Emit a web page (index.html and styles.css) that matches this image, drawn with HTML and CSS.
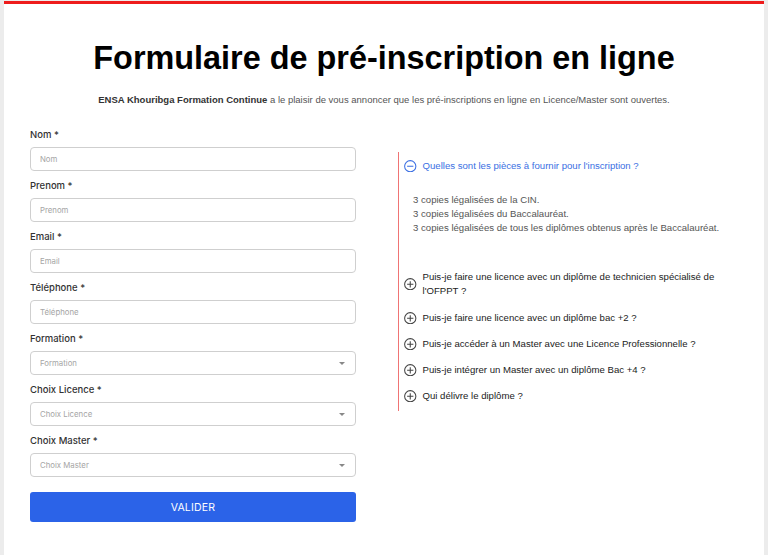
FILE: index.html
```html
<!DOCTYPE html>
<html lang="fr">
<head>
<meta charset="utf-8">
<title>Formulaire de pré-inscription en ligne</title>
<link rel="stylesheet" href="styles.css">
</head>
<body>
<div class="page">
  <h1 class="title">Formulaire de pré-inscription en ligne</h1>
  <p class="intro"><strong>ENSA Khouribga Formation Continue</strong> a le plaisir de vous annoncer que les pré-inscriptions en ligne en Licence/Master sont ouvertes.</p>
  <div class="main">
    <form class="form">
      <div class="field">
        <label class="label">Nom *</label>
        <div class="input"><span class="ph">Nom</span></div>
      </div>
      <div class="field">
        <label class="label">Prenom *</label>
        <div class="input"><span class="ph">Prenom</span></div>
      </div>
      <div class="field">
        <label class="label">Email *</label>
        <div class="input"><span class="ph">Email</span></div>
      </div>
      <div class="field">
        <label class="label">Téléphone *</label>
        <div class="input"><span class="ph">Téléphone</span></div>
      </div>
      <div class="field">
        <label class="label">Formation *</label>
        <div class="input select"><span class="ph">Formation</span><span class="caret"></span></div>
      </div>
      <div class="field">
        <label class="label">Choix Licence *</label>
        <div class="input select"><span class="ph">Choix Licence</span><span class="caret"></span></div>
      </div>
      <div class="field">
        <label class="label">Choix Master *</label>
        <div class="input select"><span class="ph">Choix Master</span><span class="caret"></span></div>
      </div>
      <button type="button" class="submit">VALIDER</button>
    </form>
    <div class="faq">
      <div class="item open">
        <div class="q">
          <svg class="ic" viewBox="0 0 12 12"><circle cx="6" cy="6" r="5.4" fill="none" stroke="currentColor" stroke-width="1"/><path d="M3 6h6" stroke="currentColor" stroke-width="1"/></svg>
          <span>Quelles sont les pièces à fournir pour l'inscription ?</span>
        </div>
        <div class="answer">
          <p>3 copies légalisées de la CIN.</p>
          <p>3 copies légalisées du Baccalauréat.</p>
          <p>3 copies légalisées de tous les diplômes obtenus après le Baccalauréat.</p>
        </div>
      </div>
      <div class="item item-long">
        <div class="q">
          <svg class="ic" viewBox="0 0 12 12"><circle cx="6" cy="6" r="5.4" fill="none" stroke="currentColor" stroke-width="1"/><path d="M3 6h6M6 3v6" stroke="currentColor" stroke-width="1"/></svg>
          <span>Puis-je faire une licence avec un diplôme de technicien spécialisé de l'OFPPT ?</span>
        </div>
      </div>
      <div class="item">
        <div class="q">
          <svg class="ic" viewBox="0 0 12 12"><circle cx="6" cy="6" r="5.4" fill="none" stroke="currentColor" stroke-width="1"/><path d="M3 6h6M6 3v6" stroke="currentColor" stroke-width="1"/></svg>
          <span>Puis-je faire une licence avec un diplôme bac +2 ?</span>
        </div>
      </div>
      <div class="item">
        <div class="q">
          <svg class="ic" viewBox="0 0 12 12"><circle cx="6" cy="6" r="5.4" fill="none" stroke="currentColor" stroke-width="1"/><path d="M3 6h6M6 3v6" stroke="currentColor" stroke-width="1"/></svg>
          <span>Puis-je accéder à un Master avec une Licence Professionnelle ?</span>
        </div>
      </div>
      <div class="item">
        <div class="q">
          <svg class="ic" viewBox="0 0 12 12"><circle cx="6" cy="6" r="5.4" fill="none" stroke="currentColor" stroke-width="1"/><path d="M3 6h6M6 3v6" stroke="currentColor" stroke-width="1"/></svg>
          <span>Puis-je intégrer un Master avec un diplôme Bac +4 ?</span>
        </div>
      </div>
      <div class="item">
        <div class="q">
          <svg class="ic" viewBox="0 0 12 12"><circle cx="6" cy="6" r="5.4" fill="none" stroke="currentColor" stroke-width="1"/><path d="M3 6h6M6 3v6" stroke="currentColor" stroke-width="1"/></svg>
          <span>Qui délivre le diplôme ?</span>
        </div>
      </div>
    </div>
  </div>
</div>
</body>
</html>
```
FILE: styles.css
```css
* { box-sizing: border-box; }
html, body { margin: 0; }
body {
  background: #ececec;
  padding: 1px 4px 0 4px;
  font-family: "Liberation Sans", Arial, sans-serif;
  height: 555px;
  overflow: hidden;
}
.page {
  background: #fff;
  border-top: 3px solid #ee1c1c;
  min-height: 560px;
  padding: 0 26px;
}
.title {
  margin: 0;
  padding-top: 34px;
  text-align: center;
  font-size: 32.4px;
  font-weight: 700;
  color: #000;
  line-height: 40px;
}
.intro {
  margin: 15px 0 0;
  text-align: center;
  font-size: 9.5px;
  color: #555;
  line-height: 14px;
}
.intro strong { color: #333; }
.main {
  display: grid;
  grid-template-columns: 326px 1fr;
  column-gap: 42px;
  margin-top: 22px;
}
.form { display: flex; flex-direction: column; }
.field { display: flex; flex-direction: column; margin-bottom: 9px; }
.label {
  font-family: Inter, "Noto Sans", sans-serif;
  font-size: 9.5px;
  font-weight: 500;
  color: #333;
  line-height: 12px;
  margin-bottom: 6px;
}
.input {
  height: 24px;
  border: 1px solid #cfcfcf;
  border-radius: 4px;
  display: flex;
  align-items: center;
  padding: 0 9px;
}
.ph {
  font-family: Inter, "Noto Sans", sans-serif;
  font-size: 7.8px;
  color: #a5a5a5;
  flex: 1;
}
.caret {
  width: 0; height: 0;
  border-left: 3px solid transparent;
  border-right: 3px solid transparent;
  border-top: 3px solid #888;
  margin-right: 1px;
}
.submit {
  margin-top: 6px;
  height: 30px;
  border: none;
  border-radius: 3px;
  background: #2b63e8;
  color: #fff;
  font-family: Inter, "Noto Sans", sans-serif;
  font-size: 10.5px;
  letter-spacing: 0.2px;
}
.faq {
  align-self: start;
  margin-top: 23px;
  border-left: 1.5px solid #f07474;
  padding: 7px 0 8px 5px;
  font-size: 9.6px;
}
.q {
  display: flex;
  align-items: center;
  gap: 6px;
  color: #222;
  line-height: 14px;
}
.ic { width: 12.5px; height: 12.5px; flex: none; color: #444; }
.item { margin-bottom: 12px; }
.item-long { margin-bottom: 13px; }
.item:last-child { margin-bottom: 0; }
.open .q { color: #3b6fe3; }
.open .ic { color: #3b6fe3; }
.answer {
  padding: 20px 0 23px 9px;
  color: #555;
}
.answer p { margin: 0; line-height: 14px; }
```
